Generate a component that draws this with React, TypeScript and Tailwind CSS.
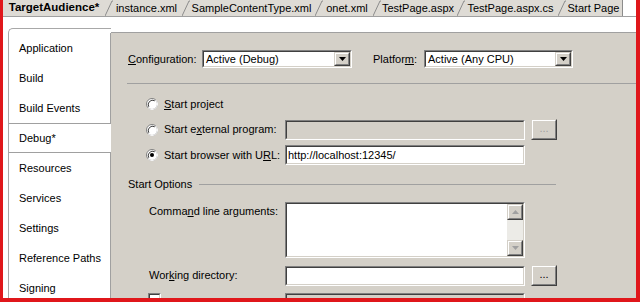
import React from "react";

const tabs: [string, number][] = [
  ["TargetAudience*", 102],
  ["instance.xml", 77],
  ["SampleContentType.xml", 133],
  ["onet.xml", 58],
  ["TestPage.aspx", 84],
  ["TestPage.aspx.cs", 101],
  ["Start Page", 65],
];

const navItems = [
  "Application",
  "Build",
  "Build Events",
  "Debug*",
  "Resources",
  "Services",
  "Settings",
  "Reference Paths",
  "Signing",
];

const Sunken: React.FC<{ className?: string; inner?: string; children?: React.ReactNode }> = ({
  className = "",
  inner = "bg-white",
  children,
}) => (
  <div className={`shrink-0 border border-t-[#808080] border-l-[#808080] border-b-white border-r-white ${className}`}>
    <div className={`w-full h-full border border-t-[#404040] border-l-[#404040] border-b-[#d4d0c8] border-r-[#d4d0c8] ${inner}`}>
      {children}
    </div>
  </div>
);

const Raised: React.FC<{ className?: string; children?: React.ReactNode }> = ({ className = "", children }) => (
  <div className={`shrink-0 border border-t-[#d4d0c8] border-l-[#d4d0c8] border-b-[#404040] border-r-[#404040] bg-[#d4d0c8] ${className}`}>
    <div className="w-full h-full border border-t-white border-l-white border-b-[#808080] border-r-[#808080] flex items-center justify-center">
      {children}
    </div>
  </div>
);

const Arrow: React.FC<{ up?: boolean; color?: string }> = ({ up, color = "#000" }) => (
  <svg width="7" height="4" viewBox="0 0 7 4">
    {up ? <polygon points="3.5,0 7,4 0,4" fill={color} /> : <polygon points="0,0 7,0 3.5,4" fill={color} />}
  </svg>
);

const Combo: React.FC<{ value: string; width: string }> = ({ value, width }) => (
  <Sunken className={`${width} h-[18px]`} inner="bg-white flex items-center">
    <span className="flex-1 pl-[2px] leading-none">{value}</span>
    <Raised className="w-[16px] h-[14px]">
      <Arrow />
    </Raised>
  </Sunken>
);

const Radio: React.FC<{ checked?: boolean }> = ({ checked }) => (
  <svg width="12" height="12" viewBox="0 0 12 12" className="shrink-0">
    <circle cx="6" cy="6" r="5.5" fill="#fff" stroke="#808080" />
    <path d="M 9.9 2.1 A 5.5 5.5 0 0 1 2.1 9.9" fill="none" stroke="#fff" />
    <path d="M 2.8 8.8 A 4.4 4.4 0 0 1 8.8 2.8" fill="none" stroke="#404040" />
    {checked && <circle cx="6" cy="6" r="2" fill="#000" />}
  </svg>
);

export default function App() {
  return (
    <div className="w-[640px] h-[302px] overflow-hidden bg-white border-l-[3px] border-r-[4px] border-b-[4px] border-[#e0171b] flex flex-col font-['Liberation_Sans',Arial,sans-serif] text-[11px] text-black">
      {/* document tabs */}
      <div className="h-[17px] flex shrink-0 border-b border-[#a0a0a0]">
        {tabs.map(([name, w], i) => (
          <div
            key={name}
            style={{ width: w }}
            className={`relative h-[16px] shrink-0 flex items-center justify-center bg-[#dedbd5] ${i === 0 ? "font-bold text-[11.5px]" : "pl-[6px]"}`}
          >
            {i > 0 && (
              <svg width="8" height="16" viewBox="0 0 8 16" className="absolute left-0 top-0">
                <line x1="0" y1="16" x2="7" y2="1" stroke="#8c8c8c" />
                <line x1="7" y1="1" x2="8" y2="1" stroke="#8c8c8c" />
              </svg>
            )}
            {i === tabs.length - 1 && <div className="absolute right-0 top-0 h-full w-px bg-[#8c8c8c]" />}
            <span>{name}</span>
          </div>
        ))}
        <div className="flex-1 bg-white" />
      </div>

      <div className="flex flex-1 pt-[11px] pl-[5px] min-h-0">
        {/* left property nav */}
        <div className="w-[103px] shrink-0 flex flex-col pt-[4px] border-l border-t border-[#a8a8a8] rounded-tl-[5px] bg-white overflow-hidden">
          {navItems.map((item) => (
            <div
              key={item}
              className={`h-[30px] shrink-0 flex items-center pl-[10px] ${
                item === "Debug*" ? "border-t border-b border-[#a0a0a0]" : "border-r border-[#a0a0a0]"
              }`}
            >
              {item}
            </div>
          ))}
        </div>

        {/* settings panel */}
        <div className="flex-1 mt-[4px] bg-[#d4d0c8] border-t border-[#a0a0a0] overflow-hidden flex flex-col">
          <div className="flex shrink-0 items-center h-[18px] mt-[17px] pl-[17px]">
            <span className="w-[74px]">
              <u>C</u>onfiguration:
            </span>
            <Combo value="Active (Debug)" width="w-[150px]" />
            <span className="ml-[21px] w-[51px]">
              Platfor<u>m</u>:
            </span>
            <Combo value="Active (Any CPU)" width="w-[149px]" />
          </div>

          <div className="h-px shrink-0 bg-[#a0a0a0] ml-[16px] mt-[15px]" />

          <div className="flex shrink-0 items-center h-[20px] mt-[10px] pl-[35px]">
            <Radio />
            <span className="ml-[6px]">
              <u>S</u>tart project
            </span>
          </div>

          <div className="flex shrink-0 items-center h-[21px] mt-[5px] pl-[35px]">
            <div className="w-[139px] flex items-center">
              <Radio />
              <span className="ml-[6px]">
                Start e<u>x</u>ternal program:
              </span>
            </div>
            <Sunken className="w-[240px] h-[20px]" inner="bg-[#d4d0c8]" />
            <Raised className="w-[26px] h-[21px] ml-[6px]">
              <span className="text-[#a0a0a0] leading-none pb-[2px]">...</span>
            </Raised>
          </div>

          <div className="flex shrink-0 items-center h-[20px] mt-[5px] pl-[35px]">
            <div className="w-[139px] flex items-center">
              <Radio checked />
              <span className="ml-[6px]">
                Start browser with U<u>R</u>L:
              </span>
            </div>
            <Sunken className="w-[240px] h-[20px]" inner="bg-white flex items-center">
              <span className="pl-[1px]">http://localhost:12345/</span>
            </Sunken>
          </div>

          <div className="flex shrink-0 items-center h-[14px] mt-[12px] pl-[17px]">
            <span>Start Options</span>
            <div className="h-px bg-[#a0a0a0] w-[357px] ml-[7px]" />
          </div>

          <div className="flex shrink-0 items-start mt-[11px] pl-[38px]">
            <span className="w-[136px] pt-[1px]">
              Comma<u>n</u>d line arguments:
            </span>
            <Sunken className="w-[240px] h-[56px]" inner="bg-white flex justify-end">
              <div className="w-[16px] h-full flex flex-col justify-between bg-[#ecebe7]">
                <Raised className="w-[16px] h-[16px]">
                  <Arrow up color="#a0a0a0" />
                </Raised>
                <Raised className="w-[16px] h-[16px]">
                  <Arrow color="#a0a0a0" />
                </Raised>
              </div>
            </Sunken>
          </div>

          <div className="flex shrink-0 items-center h-[21px] mt-[7px] pl-[38px]">
            <span className="w-[136px]">
              Wor<u>k</u>ing directory:
            </span>
            <Sunken className="w-[240px] h-[20px]" />
            <Raised className="w-[26px] h-[21px] ml-[6px]">
              <span className="leading-none pb-[2px]">...</span>
            </Raised>
          </div>

          <div className="flex shrink-0 items-start h-[20px] mt-[7px] pl-[37px]">
            <div className="w-[137px]">
              <Sunken className="w-[13px] h-[13px]" />
            </div>
            <Sunken className="w-[240px] h-[20px]" inner="bg-[#d4d0c8]" />
          </div>
        </div>
      </div>
    </div>
  );
}
